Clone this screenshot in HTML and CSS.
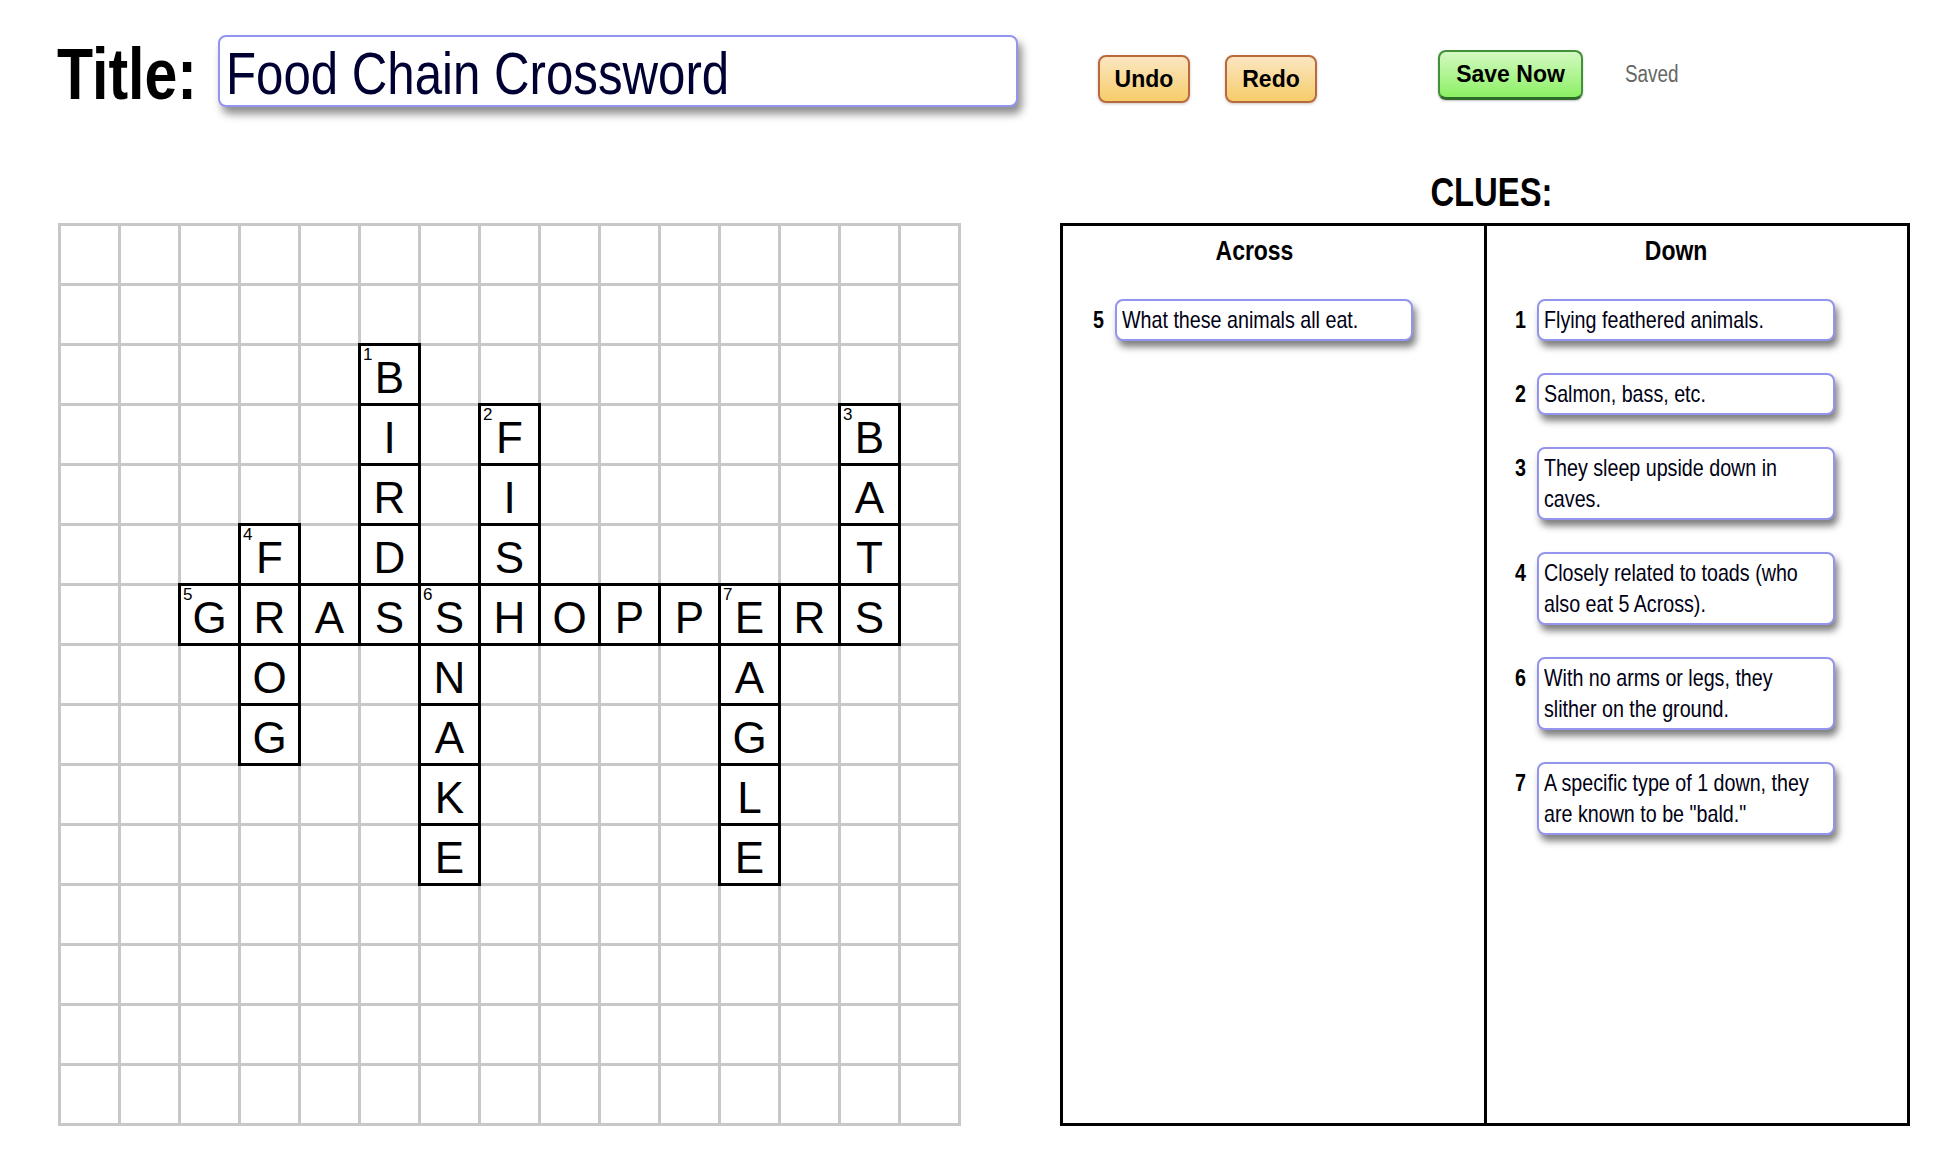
FILE: index.html
```html
<!DOCTYPE html>
<html lang="en">
<head>
<meta charset="utf-8">
<title>Food Chain Crossword</title>
<link rel="stylesheet" href="styles.css">
</head>
<body>
<div class="page">
  <header class="toolbar">
    <label class="title-label"><span class="narrow">Title:</span></label>
    <div class="title-field" role="textbox" aria-label="Title"><span class="narrow">Food Chain Crossword</span></div>
    <button class="btn btn-history btn-undo">Undo</button>
    <button class="btn btn-history btn-redo">Redo</button>
    <button class="btn btn-save">Save Now</button>
    <span class="status"><span class="narrow">Saved</span></span>
  </header>

  <main class="workspace">
    <div class="grid">
      <!-- row 0 -->
      <div class="cell"></div><div class="cell"></div><div class="cell"></div><div class="cell"></div><div class="cell"></div><div class="cell"></div><div class="cell"></div><div class="cell"></div><div class="cell"></div><div class="cell"></div><div class="cell"></div><div class="cell"></div><div class="cell"></div><div class="cell"></div><div class="cell"></div>
      <!-- row 1 -->
      <div class="cell"></div><div class="cell"></div><div class="cell"></div><div class="cell"></div><div class="cell"></div><div class="cell"></div><div class="cell"></div><div class="cell"></div><div class="cell"></div><div class="cell"></div><div class="cell"></div><div class="cell"></div><div class="cell"></div><div class="cell"></div><div class="cell"></div>
      <!-- row 2 -->
      <div class="cell"></div><div class="cell"></div><div class="cell"></div><div class="cell"></div><div class="cell"></div><div class="cell on"><span class="num">1</span>B</div><div class="cell"></div><div class="cell"></div><div class="cell"></div><div class="cell"></div><div class="cell"></div><div class="cell"></div><div class="cell"></div><div class="cell"></div><div class="cell"></div>
      <!-- row 3 -->
      <div class="cell"></div><div class="cell"></div><div class="cell"></div><div class="cell"></div><div class="cell"></div><div class="cell on">I</div><div class="cell"></div><div class="cell on"><span class="num">2</span>F</div><div class="cell"></div><div class="cell"></div><div class="cell"></div><div class="cell"></div><div class="cell"></div><div class="cell on"><span class="num">3</span>B</div><div class="cell"></div>
      <!-- row 4 -->
      <div class="cell"></div><div class="cell"></div><div class="cell"></div><div class="cell"></div><div class="cell"></div><div class="cell on">R</div><div class="cell"></div><div class="cell on">I</div><div class="cell"></div><div class="cell"></div><div class="cell"></div><div class="cell"></div><div class="cell"></div><div class="cell on">A</div><div class="cell"></div>
      <!-- row 5 -->
      <div class="cell"></div><div class="cell"></div><div class="cell"></div><div class="cell on"><span class="num">4</span>F</div><div class="cell"></div><div class="cell on">D</div><div class="cell"></div><div class="cell on">S</div><div class="cell"></div><div class="cell"></div><div class="cell"></div><div class="cell"></div><div class="cell"></div><div class="cell on">T</div><div class="cell"></div>
      <!-- row 6 -->
      <div class="cell"></div><div class="cell"></div><div class="cell on"><span class="num">5</span>G</div><div class="cell on">R</div><div class="cell on">A</div><div class="cell on">S</div><div class="cell on"><span class="num">6</span>S</div><div class="cell on">H</div><div class="cell on">O</div><div class="cell on">P</div><div class="cell on">P</div><div class="cell on"><span class="num">7</span>E</div><div class="cell on">R</div><div class="cell on">S</div><div class="cell"></div>
      <!-- row 7 -->
      <div class="cell"></div><div class="cell"></div><div class="cell"></div><div class="cell on">O</div><div class="cell"></div><div class="cell"></div><div class="cell on">N</div><div class="cell"></div><div class="cell"></div><div class="cell"></div><div class="cell"></div><div class="cell on">A</div><div class="cell"></div><div class="cell"></div><div class="cell"></div>
      <!-- row 8 -->
      <div class="cell"></div><div class="cell"></div><div class="cell"></div><div class="cell on">G</div><div class="cell"></div><div class="cell"></div><div class="cell on">A</div><div class="cell"></div><div class="cell"></div><div class="cell"></div><div class="cell"></div><div class="cell on">G</div><div class="cell"></div><div class="cell"></div><div class="cell"></div>
      <!-- row 9 -->
      <div class="cell"></div><div class="cell"></div><div class="cell"></div><div class="cell"></div><div class="cell"></div><div class="cell"></div><div class="cell on">K</div><div class="cell"></div><div class="cell"></div><div class="cell"></div><div class="cell"></div><div class="cell on">L</div><div class="cell"></div><div class="cell"></div><div class="cell"></div>
      <!-- row 10 -->
      <div class="cell"></div><div class="cell"></div><div class="cell"></div><div class="cell"></div><div class="cell"></div><div class="cell"></div><div class="cell on">E</div><div class="cell"></div><div class="cell"></div><div class="cell"></div><div class="cell"></div><div class="cell on">E</div><div class="cell"></div><div class="cell"></div><div class="cell"></div>
      <!-- row 11 -->
      <div class="cell"></div><div class="cell"></div><div class="cell"></div><div class="cell"></div><div class="cell"></div><div class="cell"></div><div class="cell"></div><div class="cell"></div><div class="cell"></div><div class="cell"></div><div class="cell"></div><div class="cell"></div><div class="cell"></div><div class="cell"></div><div class="cell"></div>
      <!-- row 12 -->
      <div class="cell"></div><div class="cell"></div><div class="cell"></div><div class="cell"></div><div class="cell"></div><div class="cell"></div><div class="cell"></div><div class="cell"></div><div class="cell"></div><div class="cell"></div><div class="cell"></div><div class="cell"></div><div class="cell"></div><div class="cell"></div><div class="cell"></div>
      <!-- row 13 -->
      <div class="cell"></div><div class="cell"></div><div class="cell"></div><div class="cell"></div><div class="cell"></div><div class="cell"></div><div class="cell"></div><div class="cell"></div><div class="cell"></div><div class="cell"></div><div class="cell"></div><div class="cell"></div><div class="cell"></div><div class="cell"></div><div class="cell"></div>
      <!-- row 14 -->
      <div class="cell"></div><div class="cell"></div><div class="cell"></div><div class="cell"></div><div class="cell"></div><div class="cell"></div><div class="cell"></div><div class="cell"></div><div class="cell"></div><div class="cell"></div><div class="cell"></div><div class="cell"></div><div class="cell"></div><div class="cell"></div><div class="cell"></div>
    </div>

    <section class="clues">
      <h2 class="clues-title"><span class="narrow narrow-center">CLUES:</span></h2>
      <div class="clue-panel">
        <div class="clue-col clue-col-across">
          <div class="clue-list">
            <h3 class="clue-heading"><span class="narrow narrow-center">Across</span></h3>
            <div class="clue"><span class="clue-num"><span class="narrow">5</span></span><div class="clue-text"><div class="clue-inner">What these animals all eat.</div></div></div>
          </div>
        </div>
        <div class="clue-col clue-col-down">
          <div class="clue-list">
            <h3 class="clue-heading"><span class="narrow narrow-center">Down</span></h3>
            <div class="clue"><span class="clue-num"><span class="narrow">1</span></span><div class="clue-text"><div class="clue-inner">Flying feathered animals.</div></div></div>
            <div class="clue"><span class="clue-num"><span class="narrow">2</span></span><div class="clue-text"><div class="clue-inner">Salmon, bass, etc.</div></div></div>
            <div class="clue"><span class="clue-num"><span class="narrow">3</span></span><div class="clue-text"><div class="clue-inner">They sleep upside down in caves.</div></div></div>
            <div class="clue"><span class="clue-num"><span class="narrow">4</span></span><div class="clue-text"><div class="clue-inner">Closely related to toads (who also eat 5 Across).</div></div></div>
            <div class="clue"><span class="clue-num"><span class="narrow">6</span></span><div class="clue-text"><div class="clue-inner">With no arms or legs, they slither on the ground.</div></div></div>
            <div class="clue"><span class="clue-num"><span class="narrow">7</span></span><div class="clue-text"><div class="clue-inner">A specific type of 1 down, they are known to be "bald."</div></div></div>
          </div>
        </div>
      </div>
    </section>
  </main>
</div>
</body>
</html>
```

FILE: styles.css
```css
html, body {
  margin: 0;
  padding: 0;
  background: #ffffff;
}

body {
  font-family: "Liberation Sans", Arial, sans-serif;
  color: #000;
}

.page {
  width: 1944px;
  height: 1168px;
  overflow: hidden;
}

/* condensed text: Arial Narrow is a horizontally compressed Arial */
.narrow {
  display: inline-block;
  transform: scaleX(0.82);
  transform-origin: left center;
  white-space: nowrap;
}

.narrow-center {
  transform-origin: center center;
}

/* ---------- toolbar ---------- */
.toolbar {
  display: flex;
  align-items: flex-start;
  padding: 35px 0 0 57px;
}

.title-label {
  width: 161px;
  margin-top: 2px;
  font-weight: bold;
  font-size: 72px;
  line-height: 74px;
}

.title-field {
  box-sizing: border-box;
  width: 800px;
  height: 72px;
  padding: 5px 8px 0 6px;
  border: 2px solid #9494ee;
  border-radius: 8px;
  background: #fff;
  font-size: 60px;
  line-height: 63px;
  color: #000033;
  box-shadow: 4px 7px 8px rgba(0, 0, 0, 0.45);
  overflow: hidden;
}

.btn {
  box-sizing: border-box;
  padding: 0;
  border-radius: 8px;
  font-family: "Liberation Sans", Arial, sans-serif;
  font-weight: bold;
  font-size: 23px;
  color: #000;
  cursor: pointer;
}

.btn-history {
  width: 92px;
  height: 48px;
  margin-top: 20px;
  border: 2px solid #b9693b;
  background: linear-gradient(#fbe6c1, #f6cc6a);
  box-shadow: 0 1px 3px rgba(0, 0, 0, 0.22);
}

.btn-undo { margin-left: 80px; }
.btn-redo { margin-left: 35px; }

.btn-save {
  width: 145px;
  height: 50px;
  margin-top: 15px;
  margin-left: 121px;
  border: 2px solid #43903a;
  border-bottom: 3px solid #2f6b2a;
  background: linear-gradient(#d4f9c2, #8cf064);
  box-shadow: 0 1px 2px rgba(0, 0, 0, 0.25);
}

.status {
  margin-left: 42px;
  margin-top: 24px;
  font-size: 23px;
  line-height: 30px;
  color: #666;
}

/* ---------- workspace ---------- */
.workspace {
  display: flex;
  align-items: flex-start;
  margin-top: 57px;
  padding-left: 58px;
}

.grid {
  display: grid;
  grid-template-columns: repeat(15, 57px);
  grid-auto-rows: 57px;
  gap: 3px;
  padding: 3px;
  margin-top: 55px;
  background: #c8c8c8;
}

.cell {
  position: relative;
  background: #fff;
}

.cell.on {
  box-sizing: border-box;
  padding-top: 6px;
  outline: 3px solid #000;
  text-align: center;
  font-size: 44px;
  line-height: 51px;
  color: #000;
}

.num {
  position: absolute;
  top: 0;
  left: 2px;
  font-size: 17px;
  line-height: 1;
}

/* ---------- clues ---------- */
.clues {
  margin-left: 99px;
}

.clues-title {
  margin: 0 0 7px;
  padding-left: 12px;
  font-size: 40px;
  line-height: 48px;
  font-weight: bold;
  text-align: center;
}

.clue-panel {
  box-sizing: border-box;
  width: 850px;
  height: 903px;
  border: 3px solid #000;
  display: grid;
  grid-template-columns: 421px 1fr;
}

.clue-col {
  padding: 10px 0 0 30px;
}

.clue-col-down {
  border-left: 3px solid #000;
  padding-left: 28px;
}

.clue-list {
  width: 322px;
}

.clue-heading {
  margin: 0 0 33px;
  font-size: 28px;
  line-height: 30px;
  font-weight: bold;
  text-align: center;
}

.clue {
  display: flex;
  align-items: baseline;
  gap: 11px;
  margin-bottom: 32px;
}

.clue-num {
  width: 11px;
  font-weight: bold;
  font-size: 24px;
}

.clue-text {
  box-sizing: border-box;
  width: 298px;
  padding: 3px 6px 4px 5px;
  border: 2px solid #9494ee;
  border-radius: 8px;
  background: #fff;
  font-size: 24px;
  line-height: 31px;
  color: #000014;
  box-shadow: 3px 6px 7px rgba(0, 0, 0, 0.5);
}

.clue-inner {
  width: 345px;
  transform: scaleX(0.82);
  transform-origin: left top;
}
```
